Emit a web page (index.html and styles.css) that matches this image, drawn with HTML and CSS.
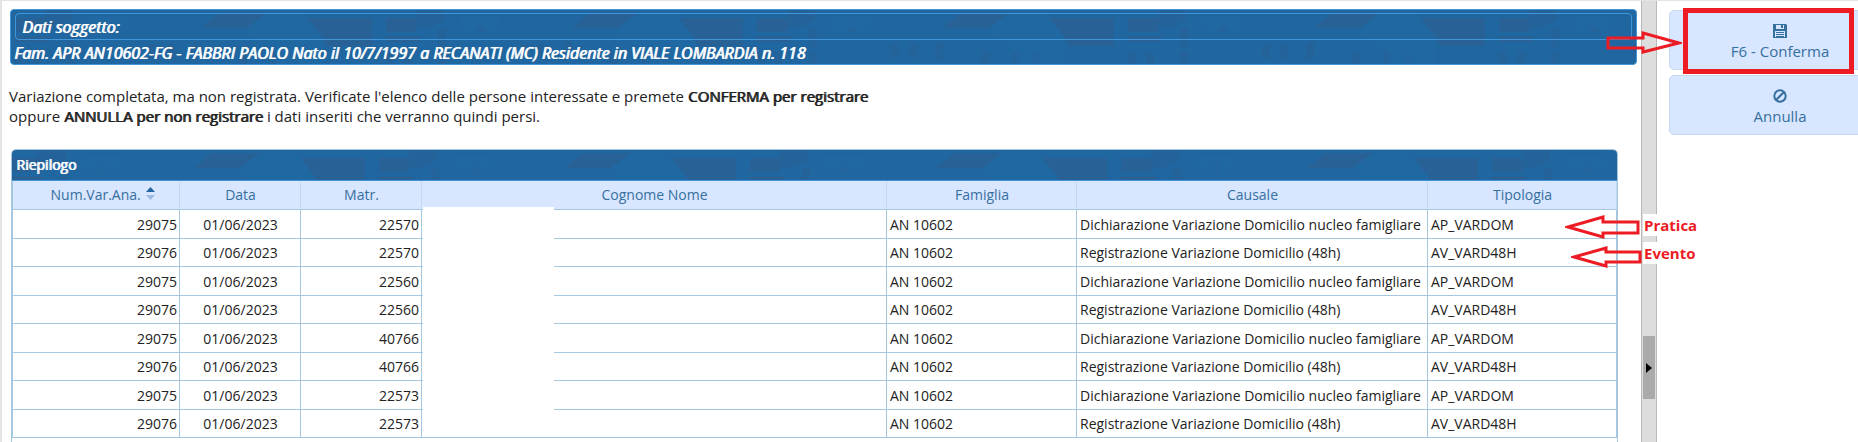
FILE: index.html
```
<!DOCTYPE html>
<html lang="it">
<head>
    <meta charset="UTF-8">
    <title>Variazione domicilio - Riepilogo</title>
    <link rel="stylesheet" href="styles.css">
</head>
<body>
    <div class="page">
        <main class="content">
            <section class="subject textured">
                <h1 class="subject-title">Dati soggetto:</h1>
                <p class="subject-data">Fam. APR AN10602-FG - FABBRI PAOLO Nato il 10/7/1997 a RECANATI (MC) Residente in VIALE LOMBARDIA n. 118</p>
            </section>

            <p class="message">
                Variazione completata, ma non registrata. Verificate l'elenco delle persone interessate e premete <b>CONFERMA per registrare</b><br>
                oppure <b>ANNULLA per non registrare</b> i dati inseriti che verranno quindi persi.
            </p>

            <section class="summary">
                <h2 class="summary-title textured">Riepilogo</h2>
                <table class="summary-table">
                    <colgroup>
                        <col class="col-num">
                        <col class="col-date">
                        <col class="col-matr">
                        <col class="col-name">
                        <col class="col-family">
                        <col class="col-cause">
                        <col class="col-type">
                    </colgroup>
                    <thead>
                        <tr>
                            <th class="sorted">Num.Var.Ana.
                                <svg class="sort" viewBox="0 0 9 13" width="9" height="13" aria-hidden="true">
                                    <path d="M0 5 4.500 0 9 5z" fill="#23659f"/>
                                    <path d="M0 8h9L4.500 13z" fill="#9dbbe0"/>
                                </svg>
                            </th>
                            <th>Data</th>
                            <th>Matr.</th>
                            <th>Cognome Nome</th>
                            <th>Famiglia</th>
                            <th>Causale</th>
                            <th>Tipologia</th>
                        </tr>
                    </thead>
                    <tbody>
                        <tr><td>29075</td><td>01/06/2023</td><td>22570</td><td><div class="redacted"></div></td><td>AN 10602</td><td>Dichiarazione Variazione Domicilio nucleo famigliare</td><td>AP_VARDOM</td></tr>
                        <tr><td>29076</td><td>01/06/2023</td><td>22570</td><td></td><td>AN 10602</td><td>Registrazione Variazione Domicilio (48h)</td><td>AV_VARD48H</td></tr>
                        <tr><td>29075</td><td>01/06/2023</td><td>22560</td><td></td><td>AN 10602</td><td>Dichiarazione Variazione Domicilio nucleo famigliare</td><td>AP_VARDOM</td></tr>
                        <tr><td>29076</td><td>01/06/2023</td><td>22560</td><td></td><td>AN 10602</td><td>Registrazione Variazione Domicilio (48h)</td><td>AV_VARD48H</td></tr>
                        <tr><td>29075</td><td>01/06/2023</td><td>40766</td><td></td><td>AN 10602</td><td>Dichiarazione Variazione Domicilio nucleo famigliare</td><td>AP_VARDOM</td></tr>
                        <tr><td>29076</td><td>01/06/2023</td><td>40766</td><td></td><td>AN 10602</td><td>Registrazione Variazione Domicilio (48h)</td><td>AV_VARD48H</td></tr>
                        <tr><td>29075</td><td>01/06/2023</td><td>22573</td><td></td><td>AN 10602</td><td>Dichiarazione Variazione Domicilio nucleo famigliare</td><td>AP_VARDOM</td></tr>
                        <tr><td>29076</td><td>01/06/2023</td><td>22573</td><td></td><td>AN 10602</td><td>Registrazione Variazione Domicilio (48h)</td><td>AV_VARD48H</td></tr>
                    </tbody>
                </table>
            </section>
        </main>

        <div class="splitter">
            <button class="splitter-handle" type="button" aria-label="Chiudi pannello">
                <svg viewBox="0 0 6 10" width="6" height="10" aria-hidden="true"><path d="M0 0 6 5 0 10z"/></svg>
            </button>
        </div>

        <aside class="actions">
            <button class="action" type="button">
                <svg viewBox="0 0 14 14" width="14" height="14" aria-hidden="true">
                    <path fill="currentColor" fill-rule="evenodd" d="M0 0h13l1 1v13H0zM3 1v4h8V1zM2 7v6h10V7z"/>
                    <path fill="currentColor" d="M8 1h2v3H8zM3 8h8v1H3zM3 10h8v1H3zM3 12h8v1H3z"/>
                </svg>
                F6 - Conferma
            </button>
            <button class="action" type="button">
                <svg viewBox="0 0 14 14" width="14" height="14" aria-hidden="true">
                    <g fill="none" stroke="currentColor" stroke-width="2"><circle cx="7" cy="7" r="5.700"/><path d="M3 11 11 3"/></g>
                </svg>
                Annulla
            </button>
        </aside>

        <!-- Callouts drawn over the page -->
        <div class="callout-box"></div>
        <svg class="arrow arrow-confirm" viewBox="0 0 76 25" width="76" height="25" aria-hidden="true">
            <path d="M2 8H37V3L73 13 37 22V18H2z"/>
        </svg>
        <svg class="arrow arrow-pratica" viewBox="0 0 76 25" width="76" height="25" aria-hidden="true">
            <path d="M73 7H38V2L3 12 38 22V18H73z"/>
        </svg>
        <svg class="arrow arrow-evento" viewBox="0 0 72 25" width="72" height="25" aria-hidden="true">
            <path d="M69 7H35V3L3 12 35 21V17H69z"/>
        </svg>
        <span class="callout-label label-pratica">Pratica</span>
        <span class="callout-label label-evento">Evento</span>
    </div>
</body>
</html>
```

FILE: styles.css
```
:root {
    --blue: #2066a0;
    --blue-line: #4296d8;
    --cell-line: #a5c8e0;
    --pale: #d8e6ff;
    --pale-line: #c3d9f0;
    --label: #36709f;
    --red: #ed1c24;
}

* {
    box-sizing: border-box;
}

body {
    margin: 0;
    font-family: "Open Sans", sans-serif;
    font-size: 14px;
    color: #222;
    background: #fff;
}

.page {
    position: relative;
    display: flex;
    height: 100vh;
    overflow: hidden;
    border-top: 1px solid #e4e4e4;
    border-left: 2px solid #e4e4e4;
}

.content {
    flex: 1;
    min-width: 0;
    padding: 8px 4px 0 8px;
}

/* Skyline of roofs and windows, repeated along the bar */
.textured {
    background-color: var(--blue);
    background-image: url("data:image/svg+xml,%3Csvg xmlns='http://www.w3.org/2000/svg' width='371' height='60'%3E%3Cg fill='%23276196'%3E%3Cpath d='M208 3h48l-20 15h-46zM297 8h64v28h-45l-4-8zM4 8h30v14H4zM4 26h34v6H4z'/%3E%3Cg opacity='.6'%3E%3Cpath d='M34 0h28v10l-16 8H34zM56 18h8v10h-8zM56 28h8v10h-8zM56 42h8v14h-8zM95 12h8v10h-8zM138 34h8v14h-8zM156 34h8v14h-8zM182 32h8v18h-8zM228 42h8v14h-8zM260 42h8v14h-8zM279 42h8v14h-8zM4 42h8v14H4zM22 42h8v14h-8z'/%3E%3C/g%3E%3C/g%3E%3Cg fill='%231f69a4'%3E%3Cpath d='M236 18l20-15h34l22 25v30h-48V40l-20-10zM78 6h40v14H78z' opacity='.6'/%3E%3C/g%3E%3C/svg%3E");
}

/* Subject banner */
.subject {
    padding: 3px 4px 0;
    height: 56px;
    border: 1px solid var(--blue-line);
    border-radius: 4px;
    color: #fff;
    font-style: italic;
}

.subject-title,
.subject-data {
    margin: 0;
    font-size: 16px;
    font-weight: 400;
    white-space: nowrap;
    text-shadow: 1px 0 currentColor;
}

.subject-title {
    padding: 1px 0 0 6px;
    line-height: 24px;
    border: 1px solid var(--blue-line);
    border-radius: 4px;
}

.subject-data {
    line-height: 26px;
    margin-left: -1px;
}

.message {
    margin: 21px 0 23px -1px;
    font-size: 15px;
    line-height: 20px;
}

.message b {
    font-weight: 400;
    text-shadow: 1px 0 currentColor;
}

/* Summary grid */
.summary {
    height: 100%;
    margin: 0 19px 0 1px;
    border: 1px solid var(--cell-line);
    border-radius: 5px 5px 0 0;
    overflow: hidden;
}

.summary-title {
    margin: 0;
    padding-left: 4px;
    border-bottom: 1px solid var(--blue-line);
    background-position: -8px 0;
    color: #fff;
    font-size: 14px;
    font-weight: 400;
    line-height: 30px;
    text-shadow: 1px 0 currentColor;
}

.summary-table {
    width: 100%;
    table-layout: fixed;
    border-collapse: separate;
    border-spacing: 0;
    border-left: 1px solid var(--cell-line);
}

.col-num { width: 167px; }
.col-date,
.col-matr { width: 121px; }
.col-name { width: 29%; }
.col-family { width: 190px; }
.col-cause { width: 351px; }
.col-type { width: 189px; }

.summary-table th,
.summary-table td {
    padding: 0 2px 0 3px;
    border-right: 1px solid var(--cell-line);
    border-bottom: 1px solid var(--cell-line);
    font-weight: 400;
    line-height: 20px;
    white-space: nowrap;
}

.summary-table th {
    height: 29px;
    background: var(--pale);
    border-right-color: var(--pale-line);
    color: var(--label);
}

.summary-table th.sorted {
    padding-left: 16px;
}

.summary-table td {
    height: 29px;
    padding-top: 1px;
}

.summary-table tr:nth-child(even) td {
    height: 28px;
    padding-top: 0;
}

.summary-table td:nth-child(1),
.summary-table td:nth-child(3) {
    text-align: right;
}

.summary-table td:nth-child(2) {
    text-align: center;
}

.summary-table td:nth-child(4) {
    padding: 0;
    vertical-align: top;
}

.sort {
    margin-left: 2px;
}

/* Blank patch that hides the names */
.redacted {
    position: absolute;
    width: 131px;
    height: 230px;
    margin-top: -3px;
    margin-left: 1px;
    background: #fff;
}

/* Splitter between the grid and the actions */
.splitter {
    flex: none;
    width: 16px;
    padding: 335px 1px 0;
    background: #ddd;
    border-left: 1px solid #b8b8b8;
    border-right: 1px solid #b8b8b8;
}

.splitter-handle {
    display: flex;
    align-items: center;
    justify-content: center;
    width: 12px;
    height: 63px;
    padding: 0;
    border: 0;
    background: #aaa;
}

/* Actions */
.actions {
    flex: none;
    width: 201px;
    padding: 9px 0 0 12px;
    overflow: hidden;
}

.action {
    display: flex;
    flex-direction: column;
    align-items: center;
    justify-content: center;
    gap: 3px;
    width: 222px;
    height: 60px;
    margin-bottom: 5px;
    padding: 4px 0 0;
    background: var(--pale);
    border: 1px solid var(--pale-line);
    border-radius: 5px;
    color: var(--label);
    font: 15px/20px "Open Sans", sans-serif;
}

/* Callouts */
.callout-box {
    position: absolute;
    top: 7px;
    right: 4px;
    width: 171px;
    height: 66px;
    border: 5px solid var(--red);
}

.arrow {
    position: absolute;
    fill: none;
    stroke: var(--red);
    stroke-width: 3px;
}

.arrow-confirm {
    top: 29px;
    right: 176px;
}

.arrow-pratica {
    top: 214px;
    right: 217px;
}

.arrow-evento {
    top: 244px;
    right: 215px;
}

.callout-label {
    position: absolute;
    right: 161px;
    width: 54px;
    padding-left: 1px;
    background: #fff;
    color: var(--red);
    font-size: 15px;
    font-weight: 700;
    line-height: 22px;
}

.label-pratica {
    top: 213px;
}

.label-evento {
    top: 241px;
}
```
